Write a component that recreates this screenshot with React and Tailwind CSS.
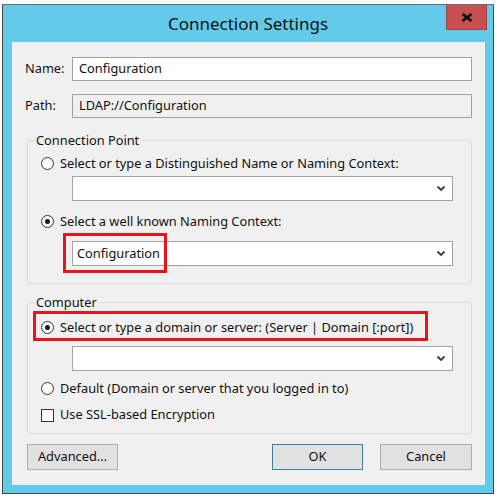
const font = { fontFamily: '"Noto Sans", "Open Sans", sans-serif' }

function Chevron() {
  return (
    <svg width="10" height="7" viewBox="0 0 10 7" className="shrink-0">
      <polyline points="1.5,1.5 5,5 8.5,1.5" fill="none" stroke="#3a3a3a" strokeWidth="1.8" />
    </svg>
  )
}

function Combo({ value }) {
  return (
    <div className="h-[25px] w-[381px] ml-[37px] bg-white border border-[#a3a3a3] flex items-center justify-between pl-[4px] pr-[6px]">
      <span className="text-[12.8px] text-[#111]">{value}</span>
      <Chevron />
    </div>
  )
}

function Radio({ checked, label }) {
  return (
    <div className="h-[16px] ml-[6px] flex items-center gap-[6px]">
      <div className="w-[13px] h-[13px] rounded-full border border-[#333] bg-white flex items-center justify-center">
        {checked && <div className="w-[5px] h-[5px] rounded-full bg-[#1a1a1a]"></div>}
      </div>
      <span className="text-[12.8px] text-[#111] leading-[16px] whitespace-nowrap">{label}</span>
    </div>
  )
}

function Button({ label, primary, className }) {
  return (
    <div
      className={
        'h-[26px] flex items-center justify-center bg-[#e1e1e1] border text-[12.8px] text-[#111] ' +
        (primary ? 'border-[#3c7fb1] ' : 'border-[#adadad] ') +
        className
      }
    >
      {label}
    </div>
  )
}

export default function App() {
  return (
    <div className="w-[498px] h-[503px] bg-white pt-[4px] pl-[2px]" style={font}>
      <div className="w-[492px] bg-[#63cae9] border border-[#4a4a4a] border-t-[#6b6b6b] pb-[8px]">
        <div className="relative h-[37px] flex items-center justify-center">
          <span className="text-[17px] text-[#111]">Connection Settings</span>
          <div className="absolute top-0 right-[6px] w-[41px] h-[25px] bg-[#c75050] border border-t-0 border-[#a34040] flex items-center justify-center">
            <svg width="12" height="9" viewBox="0 0 12 9">
              <path d="M1.5 1 L10.5 8 M10.5 1 L1.5 8" stroke="#111" strokeWidth="2.8" />
            </svg>
          </div>
        </div>

        <div className="ml-[9px] mr-[8px] bg-[#f0f0f0] pt-[15px] pb-[15px]">
          <div className="flex items-center">
            <span className="w-[60px] pl-[13px] text-[12.8px] text-[#111]">Name:</span>
            <div className="w-[400px] h-[24px] bg-white border border-[#a0a0a0] flex items-center pl-[6px] text-[12.8px] text-[#111]">
              Configuration
            </div>
          </div>
          <div className="flex items-center mt-[13px]">
            <span className="w-[60px] pl-[13px] text-[12.8px] text-[#111]">Path:</span>
            <div className="w-[400px] h-[24px] bg-[#f0f0f0] border border-[#a0a0a0] flex items-center pl-[6px] text-[12.8px] text-[#111]">
              LDAP://Configuration
            </div>
          </div>

          <fieldset className="mt-[14px] ml-[15px] w-[445px] border border-[#dcdcdc] rounded-[3px] pl-[7px] pb-[17px]">
            <legend className="px-[1px] text-[12.8px] leading-[16px] text-[#111]">Connection Point</legend>
            <div className="mt-[7px]">
              <Radio label="Select or type a Distinguished Name or Naming Context:" />
            </div>
            <div className="mt-[5px]">
              <Combo value="" />
            </div>
            <div className="mt-[12px]">
              <Radio checked label="Select a well known Naming Context:" />
            </div>
            <div className="mt-[12px] relative">
              <Combo value="Configuration" />
              <div className="absolute left-[28px] top-[-8px] w-[104px] h-[40px] border-[3px] border-[#e8141c]"></div>
            </div>
          </fieldset>

          <fieldset className="mt-[10px] ml-[15px] w-[445px] border border-[#dcdcdc] rounded-[3px] pl-[7px] pb-[10px]">
            <legend className="px-[1px] text-[12.8px] leading-[16px] text-[#111]">Computer</legend>
            <div className="mt-[9px] relative">
              <Radio checked label="Select or type a domain or server: (Server | Domain [:port])" />
              <div className="absolute left-[-2px] top-[-8px] w-[395px] h-[30px] border-[3px] border-[#e8141c]"></div>
            </div>
            <div className="mt-[11px]">
              <Combo value="" />
            </div>
            <div className="mt-[9px]">
              <Radio label="Default (Domain or server that you logged in to)" />
            </div>
            <div className="mt-[11px] h-[16px] ml-[6px] flex items-center gap-[6px]">
              <div className="w-[13px] h-[13px] border border-[#333] bg-white"></div>
              <span className="text-[12.8px] text-[#111]">Use SSL-based Encryption</span>
            </div>
          </fieldset>

          <div className="mt-[10px] ml-[15px] mr-[13px] flex justify-between">
            <Button label="Advanced..." className="w-[91px]" />
            <div className="flex gap-[17px]">
              <Button label="OK" primary className="w-[91px]" />
              <Button label="Cancel" className="w-[92px]" />
            </div>
          </div>
        </div>
      </div>
    </div>
  )
}
